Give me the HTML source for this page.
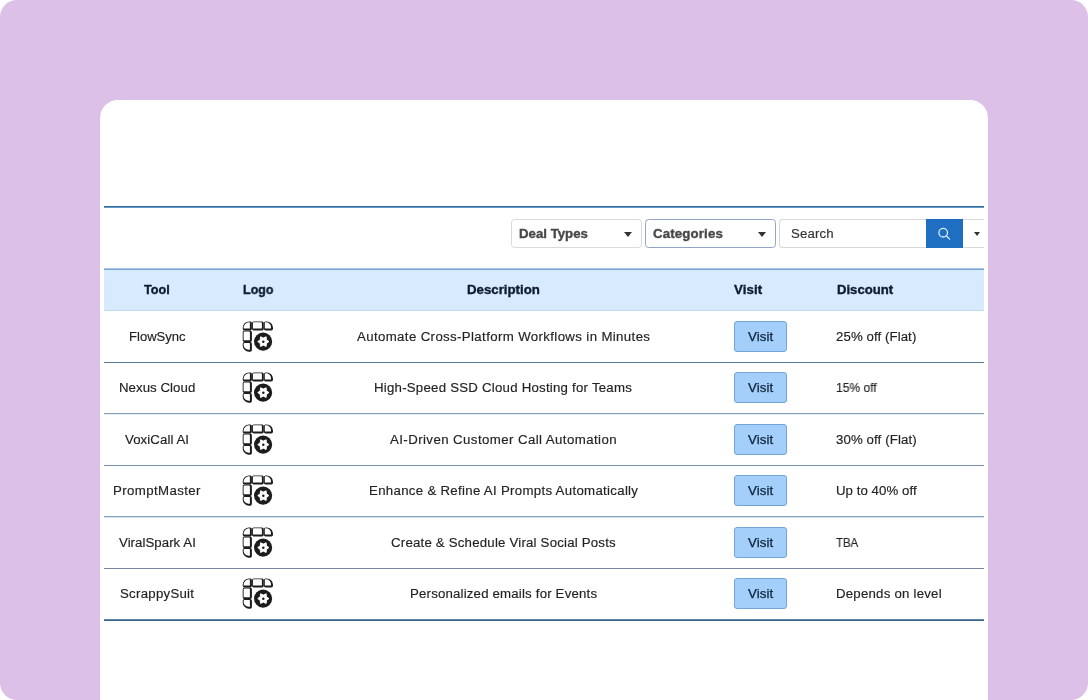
<!DOCTYPE html>
<html><head><meta charset="utf-8">
<style>
*{margin:0;padding:0;box-sizing:border-box}
html,body{width:1088px;height:700px;overflow:hidden;background:#fff;font-family:"Liberation Sans",sans-serif}
.bg{position:absolute;left:0;top:0;width:1088px;height:700px;background:#dcc0e8;border-radius:17px}
.card{position:absolute;left:100px;top:100px;width:888px;height:640px;background:#fff;border-radius:18px 18px 0 0}
.abs{position:absolute}
.t{position:absolute;white-space:nowrap;line-height:1;will-change:transform;transform-origin:0 0}
.topline{left:104px;top:206px;width:880px;height:2px;background:linear-gradient(#356999 50%,#6499cc 50%)}
.sel{top:219px;height:29px;width:131px;border:1px solid #dadada;border-radius:3.5px;background:#fff}
.tri{position:absolute;width:0;height:0;border-left:4.5px solid transparent;border-right:4.5px solid transparent;border-top:5px solid #333}
.hdr{left:104px;top:268px;width:880px;height:43px;background:linear-gradient(#a6c6ea 1px,#7fa5cf 1px,#7fa5cf 2px,#d4ecfd 2px,#d8eafd 6px);border-bottom:1px solid #c4d9ea}
.rl{position:absolute;left:104px;width:880px;height:1px;background:#557791}
.btn{position:absolute;left:734px;width:53px;height:31px;background:#a3cffa;border:1px solid #72a5d8;border-radius:3px}
.ico{position:absolute;left:240px}
</style></head><body>
<div class="bg"></div>
<div class="card"></div>
<div class="abs topline"></div>

<div class="abs sel" style="left:511px"><i class="tri" style="left:112px;top:12px"></i></div>
<div class="abs sel" style="left:645px;border-color:#93a4c9"><i class="tri" style="left:112px;top:12px"></i></div>
<div class="abs" style="left:779px;top:219px;width:205px;height:29px;border:1px solid #d9d9d9;border-right:none;border-radius:3.5px 0 0 3.5px;background:#fff"></div>
<div class="abs" style="left:926px;top:219px;width:37px;height:29px;background:#1e6ec1"></div>
<svg class="abs" style="left:926px;top:219px" width="37" height="29" viewBox="0 0 37 29"><circle cx="17.2" cy="13.7" r="4.3" fill="none" stroke="#dcecff" stroke-width="1.3"/><line x1="20.3" y1="16.8" x2="23.6" y2="20.1" stroke="#dcecff" stroke-width="1.3" stroke-linecap="round"/></svg>
<i class="tri abs" style="left:974px;top:232px;border-left-width:3.5px;border-right-width:3.5px;border-top-width:4px"></i>

<div class="abs hdr"></div>
<div class="rl" style="top:362px;background:#587893"></div>
<div class="rl" style="top:413px;height:2px;background:linear-gradient(#8a9db6 50%,#e4ebf2 50%)"></div>
<div class="rl" style="top:465px;background:#7a8ead"></div>
<div class="rl" style="top:516px;height:2px;background:linear-gradient(#89a2bf 50%,#cfe0f2 50%)"></div>
<div class="rl" style="top:568px;background:#75889f"></div>
<div class="rl" style="top:619px;height:2px;background:linear-gradient(#6688ae 50%,#3a5e8c 50%)"></div>
<svg width="0" height="0" style="position:absolute"><defs><symbol id="ic" viewBox="0 0 36 36">
<path fill="#1c1c1c" d="M9.00 3.40H10.20A1.70 1.70 0 0 1 11.90 5.10V10.70A1.70 1.70 0 0 1 10.20 12.40H4.40A1.70 1.70 0 0 1 2.70 10.70V9.70A6.30 6.30 0 0 1 9.00 3.40Z"/><path fill="#fff" d="M9.00 4.30H9.30A0.60 0.60 0 0 1 9.90 4.90V10.20A0.30 0.30 0 0 1 9.60 10.50H3.90A0.30 0.30 0 0 1 3.60 10.20V9.70A5.40 5.40 0 0 1 9.00 4.30Z"/><path fill="#1c1c1c" d="M13.70 3.40H22.10A1.70 1.70 0 0 1 23.80 5.10V10.80A1.70 1.70 0 0 1 22.10 12.50H13.70A1.70 1.70 0 0 1 12.00 10.80V5.10A1.70 1.70 0 0 1 13.70 3.40Z"/><path fill="#fff" d="M13.80 4.30H21.00A0.90 0.90 0 0 1 21.90 5.20V10.30A0.30 0.30 0 0 1 21.60 10.60H13.20A0.30 0.30 0 0 1 12.90 10.30V5.20A0.90 0.90 0 0 1 13.80 4.30Z"/><path fill="#1c1c1c" d="M25.60 3.40H26.70A6.30 6.30 0 0 1 33.00 9.70V10.80A1.70 1.70 0 0 1 31.30 12.50H25.60A1.70 1.70 0 0 1 23.90 10.80V5.10A1.70 1.70 0 0 1 25.60 3.40Z"/><path fill="#fff" d="M25.40 4.30H26.00A5.00 5.00 0 0 1 31.00 9.30V10.30A0.30 0.30 0 0 1 30.70 10.60H25.10A0.30 0.30 0 0 1 24.80 10.30V4.90A0.60 0.60 0 0 1 25.40 4.30Z"/><path fill="#1c1c1c" d="M4.40 12.50H10.20A1.70 1.70 0 0 1 11.90 14.20V22.30A1.70 1.70 0 0 1 10.20 24.00H4.40A1.70 1.70 0 0 1 2.70 22.30V14.20A1.70 1.70 0 0 1 4.40 12.50Z"/><path fill="#fff" d="M4.50 13.40H9.00A0.90 0.90 0 0 1 9.90 14.30V21.90A0.30 0.30 0 0 1 9.60 22.20H3.90A0.30 0.30 0 0 1 3.60 21.90V14.30A0.90 0.90 0 0 1 4.50 13.40Z"/><path fill="#1c1c1c" d="M4.40 24.10H10.20A1.70 1.70 0 0 1 11.90 25.80V32.00A1.70 1.70 0 0 1 10.20 33.70H9.00A6.30 6.30 0 0 1 2.70 27.40V25.80A1.70 1.70 0 0 1 4.40 24.10Z"/><path fill="#fff" d="M4.50 25.00H9.30A0.60 0.60 0 0 1 9.90 25.60V31.40A0.30 0.30 0 0 1 9.60 31.70H8.60A5.00 5.00 0 0 1 3.60 26.70V25.90A0.90 0.90 0 0 1 4.50 25.00Z"/>
<circle fill="#1c1c1c" cx="23.1" cy="23.6" r="9.05"/>
<polygon fill="#fff" stroke="#fff" stroke-width="0.9" stroke-linejoin="round" points="28.95,23.60 26.47,25.40 26.15,28.45 23.35,27.20 20.55,28.45 20.23,25.40 17.75,23.60 20.23,21.80 20.55,18.75 23.35,20.00 26.15,18.75 26.47,21.80"/>
<circle fill="#1c1c1c" cx="23.3" cy="23.7" r="1.25"/>
</symbol></defs></svg>
<div class="t" style="left:519.10px;top:227.52px;font-size:12.50px;letter-spacing:0.000px;color:#484848;transform:scaleX(1.059);font-weight:bold;-webkit-text-stroke:0.35px #484848;">Deal Types</div>
<div class="t" style="left:653.30px;top:227.52px;font-size:12.50px;letter-spacing:0.139px;color:#484848;transform:scaleX(1.060);font-weight:bold;-webkit-text-stroke:0.35px #484848;">Categories</div>
<div class="t" style="left:791.10px;top:227.52px;font-size:12.50px;letter-spacing:0.118px;color:#333;transform:scaleX(1.060);-webkit-text-stroke:0.15px #333;">Search</div>
<div class="t" style="left:144.40px;top:284.32px;font-size:12.50px;letter-spacing:0.000px;color:#0e1b2e;transform:scaleX(1.014);font-weight:bold;-webkit-text-stroke:0.35px #0e1b2e;">Tool</div>
<div class="t" style="left:242.60px;top:284.32px;font-size:12.50px;letter-spacing:0.000px;color:#0e1b2e;transform:scaleX(0.992);font-weight:bold;-webkit-text-stroke:0.35px #0e1b2e;">Logo</div>
<div class="t" style="left:466.70px;top:284.32px;font-size:12.50px;letter-spacing:0.000px;color:#0e1b2e;transform:scaleX(1.059);font-weight:bold;-webkit-text-stroke:0.35px #0e1b2e;">Description</div>
<div class="t" style="left:733.80px;top:284.32px;font-size:12.50px;letter-spacing:0.084px;color:#0e1b2e;transform:scaleX(1.060);font-weight:bold;-webkit-text-stroke:0.35px #0e1b2e;">Visit</div>
<div class="t" style="left:836.70px;top:284.32px;font-size:12.50px;letter-spacing:0.000px;color:#0e1b2e;transform:scaleX(1.049);font-weight:bold;-webkit-text-stroke:0.35px #0e1b2e;">Discount</div>
<div class="t" style="left:128.90px;top:331.02px;font-size:12.50px;letter-spacing:0.000px;color:#222;transform:scaleX(1.045);-webkit-text-stroke:0.15px #222;">FlowSync</div>
<div class="t" style="left:356.70px;top:331.02px;font-size:12.50px;letter-spacing:0.343px;color:#222;transform:scaleX(1.060);-webkit-text-stroke:0.15px #222;">Automate Cross-Platform Workflows in Minutes</div>
<div class="t" style="left:836.00px;top:331.02px;font-size:12.50px;letter-spacing:0.073px;color:#222;transform:scaleX(1.060);-webkit-text-stroke:0.15px #222;">25% off (Flat)</div>
<div class="btn" style="top:321.00px"></div>
<div class="t" style="left:747.80px;top:331.02px;font-size:12.50px;letter-spacing:0.073px;color:#0c2238;transform:scaleX(1.060);-webkit-text-stroke:0.25px #0c2238;">Visit</div>
<svg class="ico" style="top:318.00px" width="36" height="36" viewBox="0 0 36 36"><use href="#ic"/></svg>
<div class="t" style="left:119.05px;top:382.42px;font-size:12.50px;letter-spacing:0.042px;color:#222;transform:scaleX(1.060);-webkit-text-stroke:0.15px #222;">Nexus Cloud</div>
<div class="t" style="left:374.30px;top:382.42px;font-size:12.50px;letter-spacing:0.214px;color:#222;transform:scaleX(1.060);-webkit-text-stroke:0.15px #222;">High-Speed SSD Cloud Hosting for Teams</div>
<div class="t" style="left:836.00px;top:382.42px;font-size:12.50px;letter-spacing:0.000px;color:#222;transform:scaleX(0.962);-webkit-text-stroke:0.15px #222;">15% off</div>
<div class="btn" style="top:372.40px"></div>
<div class="t" style="left:747.80px;top:382.42px;font-size:12.50px;letter-spacing:0.073px;color:#0c2238;transform:scaleX(1.060);-webkit-text-stroke:0.25px #0c2238;">Visit</div>
<svg class="ico" style="top:369.40px" width="36" height="36" viewBox="0 0 36 36"><use href="#ic"/></svg>
<div class="t" style="left:125.20px;top:433.82px;font-size:12.50px;letter-spacing:0.063px;color:#222;transform:scaleX(1.060);-webkit-text-stroke:0.15px #222;">VoxiCall AI</div>
<div class="t" style="left:389.90px;top:433.82px;font-size:12.50px;letter-spacing:0.394px;color:#222;transform:scaleX(1.060);-webkit-text-stroke:0.15px #222;">AI-Driven Customer Call Automation</div>
<div class="t" style="left:836.00px;top:433.82px;font-size:12.50px;letter-spacing:0.095px;color:#222;transform:scaleX(1.060);-webkit-text-stroke:0.15px #222;">30% off (Flat)</div>
<div class="btn" style="top:423.80px"></div>
<div class="t" style="left:747.80px;top:433.82px;font-size:12.50px;letter-spacing:0.073px;color:#0c2238;transform:scaleX(1.060);-webkit-text-stroke:0.25px #0c2238;">Visit</div>
<svg class="ico" style="top:420.80px" width="36" height="36" viewBox="0 0 36 36"><use href="#ic"/></svg>
<div class="t" style="left:113.45px;top:485.22px;font-size:12.50px;letter-spacing:0.369px;color:#222;transform:scaleX(1.060);-webkit-text-stroke:0.15px #222;">PromptMaster</div>
<div class="t" style="left:368.70px;top:485.22px;font-size:12.50px;letter-spacing:0.282px;color:#222;transform:scaleX(1.060);-webkit-text-stroke:0.15px #222;">Enhance &amp; Refine AI Prompts Automatically</div>
<div class="t" style="left:836.00px;top:485.22px;font-size:12.50px;letter-spacing:0.042px;color:#222;transform:scaleX(1.060);-webkit-text-stroke:0.15px #222;">Up to 40% off</div>
<div class="btn" style="top:475.20px"></div>
<div class="t" style="left:747.80px;top:485.22px;font-size:12.50px;letter-spacing:0.073px;color:#0c2238;transform:scaleX(1.060);-webkit-text-stroke:0.25px #0c2238;">Visit</div>
<svg class="ico" style="top:472.20px" width="36" height="36" viewBox="0 0 36 36"><use href="#ic"/></svg>
<div class="t" style="left:118.80px;top:536.62px;font-size:12.50px;letter-spacing:0.036px;color:#222;transform:scaleX(1.060);-webkit-text-stroke:0.15px #222;">ViralSpark AI</div>
<div class="t" style="left:390.85px;top:536.62px;font-size:12.50px;letter-spacing:0.187px;color:#222;transform:scaleX(1.060);-webkit-text-stroke:0.15px #222;">Create &amp; Schedule Viral Social Posts</div>
<div class="t" style="left:836.00px;top:536.62px;font-size:12.50px;letter-spacing:0.000px;color:#222;transform:scaleX(0.909);-webkit-text-stroke:0.15px #222;">TBA</div>
<div class="btn" style="top:526.60px"></div>
<div class="t" style="left:747.80px;top:536.62px;font-size:12.50px;letter-spacing:0.073px;color:#0c2238;transform:scaleX(1.060);-webkit-text-stroke:0.25px #0c2238;">Visit</div>
<svg class="ico" style="top:523.60px" width="36" height="36" viewBox="0 0 36 36"><use href="#ic"/></svg>
<div class="t" style="left:120.20px;top:588.02px;font-size:12.50px;letter-spacing:0.241px;color:#222;transform:scaleX(1.060);-webkit-text-stroke:0.15px #222;">ScrappySuit</div>
<div class="t" style="left:409.70px;top:588.02px;font-size:12.50px;letter-spacing:0.166px;color:#222;transform:scaleX(1.060);-webkit-text-stroke:0.15px #222;">Personalized emails for Events</div>
<div class="t" style="left:836.00px;top:588.02px;font-size:12.50px;letter-spacing:0.202px;color:#222;transform:scaleX(1.060);-webkit-text-stroke:0.15px #222;">Depends on level</div>
<div class="btn" style="top:578.00px"></div>
<div class="t" style="left:747.80px;top:588.02px;font-size:12.50px;letter-spacing:0.073px;color:#0c2238;transform:scaleX(1.060);-webkit-text-stroke:0.25px #0c2238;">Visit</div>
<svg class="ico" style="top:575.00px" width="36" height="36" viewBox="0 0 36 36"><use href="#ic"/></svg>
</body></html>
